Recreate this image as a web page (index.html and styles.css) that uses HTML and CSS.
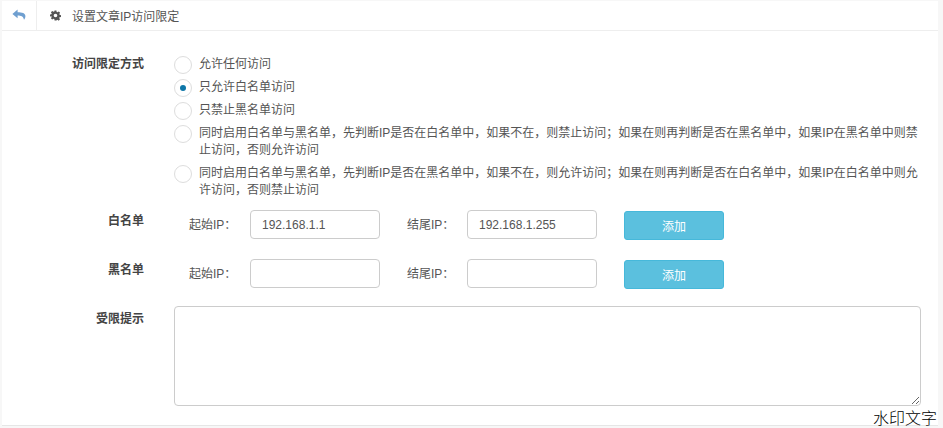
FILE: index.html
```html
<!DOCTYPE html>
<html lang="zh-CN">
<head>
<meta charset="utf-8">
<title>设置文章IP访问限定</title>
<link rel="stylesheet" href="styles.css">
</head>
<body>
<div class="page">
  <header class="bar">
    <a class="back"><svg width="14" height="13" viewBox="0 0 14 13"><path fill="#6f9fd0" d="M5.6 0.6 0.400 4.900l5.200 4.300V6.500c3.400 0 5.600.6 6.400 4.300.9-1 1.500-2.400 1.400-3.800C13.300 3.900 10 3.200 5.600 3.200z"/></svg></a>
    <div class="title">
      <svg width="11" height="11" viewBox="0 0 24 24"><path fill="#555" fill-rule="evenodd" d="M10 1h4l.6 3.200 1.900.8 2.700-1.800 2.800 2.800-1.800 2.700.8 1.900 3 .6v4l-3.200.6-.8 1.900 1.800 2.700-2.800 2.800-2.700-1.800-1.900.8L14 23h-4l-.6-3.200-1.900-.8-2.700 1.800L2 18l1.800-2.700-.8-1.900L0 14v-4l3-.6.8-1.900L2 4.800 4.800 2l2.700 1.800 1.900-.8zM12 8a4 4 0 1 0 0 8 4 4 0 0 0 0-8z"/></svg>
      <span>设置文章IP访问限定</span>
    </div>
  </header>
  <form class="form">
    <div class="row row-mode">
      <div class="label">访问限定方式</div>
      <div class="options">
        <label class="opt"><span class="radio"></span><span class="opt-text">允许任何访问</span></label>
        <label class="opt"><span class="radio on"></span><span class="opt-text">只允许白名单访问</span></label>
        <label class="opt"><span class="radio"></span><span class="opt-text">只禁止黑名单访问</span></label>
        <label class="opt"><span class="radio"></span><span class="opt-text">同时启用白名单与黑名单，先判断IP是否在白名单中，如果不在，则禁止访问；如果在则再判断是否在黑名单中，如果IP在黑名单中则禁止访问，否则允许访问</span></label>
        <label class="opt"><span class="radio"></span><span class="opt-text">同时启用白名单与黑名单，先判断IP是否在黑名单中，如果不在，则允许访问；如果在则再判断是否在白名单中，如果IP在白名单中则允许访问，否则禁止访问</span></label>
      </div>
    </div>
    <div class="row row-ip">
      <div class="label">白名单</div>
      <div class="ip-fields">
        <span class="ip-label">起始IP：</span><input class="ip" value="192.168.1.1">
        <span class="ip-label second">结尾IP：</span><input class="ip" value="192.168.1.255">
        <button type="button" class="add">添加</button>
      </div>
    </div>
    <div class="row row-ip">
      <div class="label">黑名单</div>
      <div class="ip-fields">
        <span class="ip-label">起始IP：</span><input class="ip">
        <span class="ip-label second">结尾IP：</span><input class="ip">
        <button type="button" class="add">添加</button>
      </div>
    </div>
    <div class="row row-msg">
      <div class="label">受限提示</div>
      <textarea class="msg"></textarea>
    </div>
  </form>
  <div class="watermark">水印文字</div>
</div>
</body>
</html>
```
FILE: styles.css
```css
* { box-sizing: border-box; }
html, body { margin: 0; height: 100%; }
body {
  background: #f7f7f7;
  color: #555;
  font-family: "Liberation Sans", "Noto Sans CJK SC", sans-serif;
  font-size: 12px;
  overflow: hidden;
}
.page {
  position: relative;
  width: 936px;
  height: 425px;
  margin: 1px 0 0 2px;
  background: #fff;
  border-bottom: 1px solid #e6e6e6;
}
.bar {
  display: flex;
  height: 30px;
  border-bottom: 1px solid #eee;
}
.back {
  display: flex;
  align-items: center;
  justify-content: center;
  width: 35px;
  border-right: 1px solid #eee;
  padding-right: 1px;
}
.title {
  display: flex;
  align-items: center;
  gap: 11px;
  padding-left: 13px;
}
.form { padding-top: 25px; }
.row { display: flex; }
.label {
  width: 142px;
  text-align: right;
  font-weight: bold;
  color: #444;
  flex: none;
  line-height: 14px;
}
.row-mode .label { padding-top: 1px; }
.options { margin-left: 30px; width: 748px; }
.opt {
  display: flex;
  align-items: flex-start;
  line-height: 17px;
  margin-bottom: 6px;
}
.radio {
  flex: none;
  width: 18px;
  height: 18px;
  border: 1px solid #ddd;
  border-radius: 50%;
  margin: 0 7px -1px 0;
  display: flex;
  align-items: center;
  justify-content: center;
}
.radio.on::after {
  content: "";
  width: 6px;
  height: 6px;
  border-radius: 50%;
  background: #0e76a8;
}
.row-ip { height: 49px; }
.row-mode + .row-ip { margin-top: 5px; }
.row-ip + .row-ip { height: 47px; }
.row-ip .label { padding-top: 4px; }
.row-msg .label { padding-top: 6px; }
.ip-fields { display: flex; align-items: flex-start; margin-left: 45px; }
.ip-label { width: 61px; line-height: 30px; }
.ip-label.second { width: 60px; margin-left: 27px; }
.ip {
  width: 130px;
  height: 29px;
  border: 1px solid #ccc;
  border-radius: 4px;
  padding: 0 11px;
  font: 12px "Liberation Sans", sans-serif;
  color: #555;
}
.add {
  width: 100px;
  height: 29px;
  margin: 1px 0 0 27px;
  background: #5bc0de;
  border: 1px solid #46b8da;
  border-radius: 3px;
  color: #fff;
  font: 12px "Liberation Sans", "Noto Sans CJK SC", sans-serif;
}
.msg {
  display: block;
  width: 747px;
  height: 100px;
  margin-left: 30px;
  border: 1px solid #ccc;
  border-radius: 4px;
}
.watermark {
  position: absolute;
  right: 1px;
  bottom: -2px;
  font-family: "Noto Sans CJK SC", sans-serif;
  font-weight: 300;
  font-size: 16px;
  color: #000;
  line-height: 20px;
}
```
